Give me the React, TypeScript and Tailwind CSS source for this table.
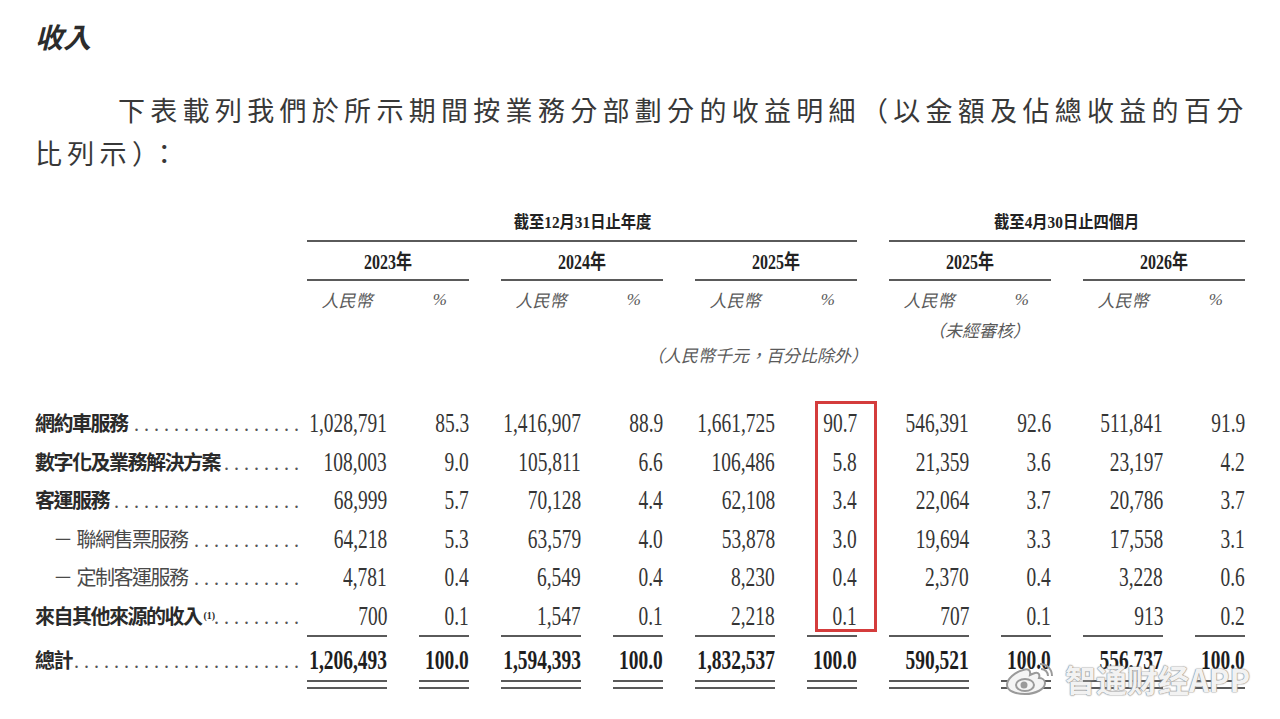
import React from "react";

type Row = {
  label: string;
  kind: "main" | "sub";
  sup?: string;
  gap?: boolean;
  v: string[];
};

const rows: Row[] = [
  { label: "網約車服務", kind: "main", v: ["1,028,791", "85.3", "1,416,907", "88.9", "1,661,725", "90.7", "546,391", "92.6", "511,841", "91.9"] },
  { label: "數字化及業務解決方案", kind: "main", gap: true, v: ["108,003", "9.0", "105,811", "6.6", "106,486", "5.8", "21,359", "3.6", "23,197", "4.2"] },
  { label: "客運服務", kind: "main", v: ["68,999", "5.7", "70,128", "4.4", "62,108", "3.4", "22,064", "3.7", "20,786", "3.7"] },
  { label: "聯網售票服務", kind: "sub", v: ["64,218", "5.3", "63,579", "4.0", "53,878", "3.0", "19,694", "3.3", "17,558", "3.1"] },
  { label: "定制客運服務", kind: "sub", v: ["4,781", "0.4", "6,549", "0.4", "8,230", "0.4", "2,370", "0.4", "3,228", "0.6"] },
  { label: "來自其他來源的收入", kind: "main", sup: "(1)", v: ["700", "0.1", "1,547", "0.1", "2,218", "0.1", "707", "0.1", "913", "0.2"] },
];

const totals = ["1,206,493", "100.0", "1,594,393", "100.0", "1,832,537", "100.0", "590,521", "100.0", "556,737", "100.0"];

const years = ["2023", "2024", "2025", "2025", "2026"];
const groups = [0, 1, 2, 3, 4];

const cjk = "font-['Noto_Sans_CJK_TC','Noto_Sans_CJK_SC',sans-serif]";
const mixed = "font-['Liberation_Serif','Noto_Sans_CJK_TC',serif]";

const DOTS = ".".repeat(40);

// numbers in the scan are narrow, so squeeze them from the right edge
function Num({ v, bold }: { v: string; bold?: boolean }) {
  return (
    <span
      className={`inline-block shrink-0 origin-right scale-x-[0.72] whitespace-nowrap font-['Liberation_Serif',serif] text-[27px] ${
        bold ? "font-bold text-[#1e1e1e]" : "text-[#353535]"
      }`}
    >
      {v}
    </span>
  );
}

function Dots({ gap }: { gap?: boolean }) {
  return (
    <div className={`flex flex-1 justify-end overflow-hidden pr-[3px] ${gap ? "pl-[10px]" : "pl-[2px]"}`}>
      <span className="whitespace-nowrap font-['Liberation_Serif',serif] text-[20px] tracking-[5px] text-[#555]">
        {DOTS}
      </span>
    </div>
  );
}

function Label({ row }: { row: Row }) {
  return (
    <div className="flex w-[272px] items-baseline">
      <span
        className={`${cjk} whitespace-nowrap text-[20px] tracking-[-1.5px] ${
          row.kind === "sub" ? "pl-[18px] font-normal text-[#4a4a4a]" : "font-bold text-[#2a2a2a]"
        }`}
      >
        {row.kind === "sub" && <span className="mr-[5px]">－</span>}
        {row.label}
        {row.sup && (
          <sup className="ml-[2px] font-['Liberation_Serif',serif] text-[10px] tracking-normal">{row.sup}</sup>
        )}
      </span>
      <Dots gap={row.gap} />
    </div>
  );
}

function DataRow({ row }: { row: Row }) {
  return (
    <div className="flex h-[38.5px] leading-[38.5px]">
      <Label row={row} />
      <div className="flex gap-[32px]">
        {groups.map((g) => (
          <div key={g} className="flex w-[162px]">
            <div className="flex w-[80px] justify-end">
              <Num v={row.v[g * 2]} />
            </div>
            <div className="flex w-[82px] justify-end">
              <Num v={row.v[g * 2 + 1]} />
            </div>
          </div>
        ))}
      </div>
    </div>
  );
}

function TotalCell({ v, w }: { v: string; w: string }) {
  return (
    <div className={w}>
      <div className="flex justify-end border-t-2 border-[#5a5a5a] pt-[4px] leading-[38px]">
        <Num v={v} bold />
      </div>
      <div className="mt-[1px] h-[9px] border-y-2 border-[#5a5a5a]" />
    </div>
  );
}

function TotalRow() {
  return (
    <div className="flex">
      <div className="flex w-[272px] items-baseline pt-[6px] leading-[38px]">
        <span className={`${cjk} text-[20px] font-bold tracking-[-1.5px] text-[#2a2a2a]`}>總計</span>
        <Dots gap />
      </div>
      <div className="flex gap-[32px]">
        {groups.map((g) => (
          <div key={g} className="flex w-[162px]">
            <TotalCell v={totals[g * 2]} w="w-[80px]" />
            <div className="flex w-[82px] justify-end">
              <TotalCell v={totals[g * 2 + 1]} w="w-[50px]" />
            </div>
          </div>
        ))}
      </div>
    </div>
  );
}

function Weibo() {
  return (
    <svg width="52" height="32" viewBox="0 0 52 32" fill="none" stroke="#9a9a9a" strokeWidth="2">
      <path d="M20 7c-8 2-16 9-16 15 0 6 9 9 18 9 11 0 20-5 20-11 0-4-4-5-6-5 1-3 0-6-4-5-3 1-5 2-5 2 1-5-2-7-7-5z" fill="#f4f4f4" />
      <ellipse cx="22" cy="22" rx="9" ry="6" />
      <circle cx="21" cy="22" r="2.5" fill="#9a9a9a" />
      <path d="M38 6c4 0 7 3 7 7" />
      <path d="M37 1c7 0 12 5 12 12" />
    </svg>
  );
}

export default function App() {
  return (
    <div className="relative h-[719px] w-[1280px] overflow-hidden bg-white pl-[35px]">
      <div className={`${cjk} pt-[22px] text-[28px] font-bold italic leading-[28px] text-[#2c2c2c]`}>收入</div>

      <div className={`${cjk} mt-[38px] whitespace-nowrap text-[27px] leading-[43px] tracking-[5.3px] text-[#383838]`}>
        <div className="pl-[83px]">下表載列我們於所示期間按業務分部劃分的收益明細（以金額及佔總收益的百分</div>
        <div>比列示）：</div>
      </div>

      <div className="mt-[36px] flex">
        <div className="w-[272px]" />
        <div className="h-[32px] w-[550px] border-b-2 border-[#5a5a5a] text-center leading-[24px]">
          <span className={`${mixed} inline-block scale-x-[0.9] text-[17px] font-bold text-[#222]`}>截至12月31日止年度</span>
        </div>
        <div className="ml-[32px] h-[32px] w-[356px] border-b-2 border-[#5a5a5a] text-center leading-[24px]">
          <span className={`${mixed} inline-block scale-x-[0.9] text-[17px] font-bold text-[#222]`}>截至4月30日止四個月</span>
        </div>
      </div>

      <div className="flex">
        <div className="w-[272px]" />
        <div className="flex gap-[32px]">
          {groups.map((g) => (
            <div key={g} className="h-[39px] w-[162px] border-b-2 border-[#5a5a5a] pt-[8px] text-center leading-[24px]">
              <span className={`${mixed} inline-block scale-x-[0.8] text-[20px] font-bold text-[#222]`}>
                {years[g]}年
              </span>
            </div>
          ))}
        </div>
      </div>

      <div className="flex h-[30px] pt-[8px] leading-[22px]">
        <div className="w-[272px]" />
        <div className="flex gap-[32px]">
          {groups.map((g) => (
            <div key={g} className="flex w-[162px] text-[#5a5a5a] italic">
              <div className={`${cjk} w-[80px] text-center text-[17px]`}>人民幣</div>
              <div className="w-[82px] pr-[22px] text-right font-['Liberation_Serif',serif] text-[17px]">%</div>
            </div>
          ))}
        </div>
      </div>

      <div className={`${cjk} h-[30px] pl-[893px] pt-[8px] text-[17px] italic leading-[22px] text-[#5a5a5a]`}>
        （未經審核）
      </div>

      <div className={`${cjk} h-[25px] w-[833px] pt-[3px] text-right text-[17px] italic leading-[22px] text-[#5a5a5a]`}>
        （人民幣千元，百分比除外）
      </div>

      <div className="mt-[38px]">
        {rows.map((r) => (
          <DataRow key={r.label} row={r} />
        ))}
        <TotalRow />
      </div>

      <div className="absolute left-[815px] top-[401px] h-[231px] w-[62px] border-[3px] border-[#d43c3c]" />

      <div className="absolute left-[1003px] top-[663px] flex items-center gap-[10px]">
        <Weibo />
        <span className="font-['Noto_Sans_CJK_SC',sans-serif] text-[31px] font-bold leading-[32px] text-[#f2f2f2] [text-shadow:0_0_1px_#8a8a8a,0_0_1px_#8a8a8a,0_0_2px_#aaa]">
          智通财经APP
        </span>
      </div>
    </div>
  );
}
